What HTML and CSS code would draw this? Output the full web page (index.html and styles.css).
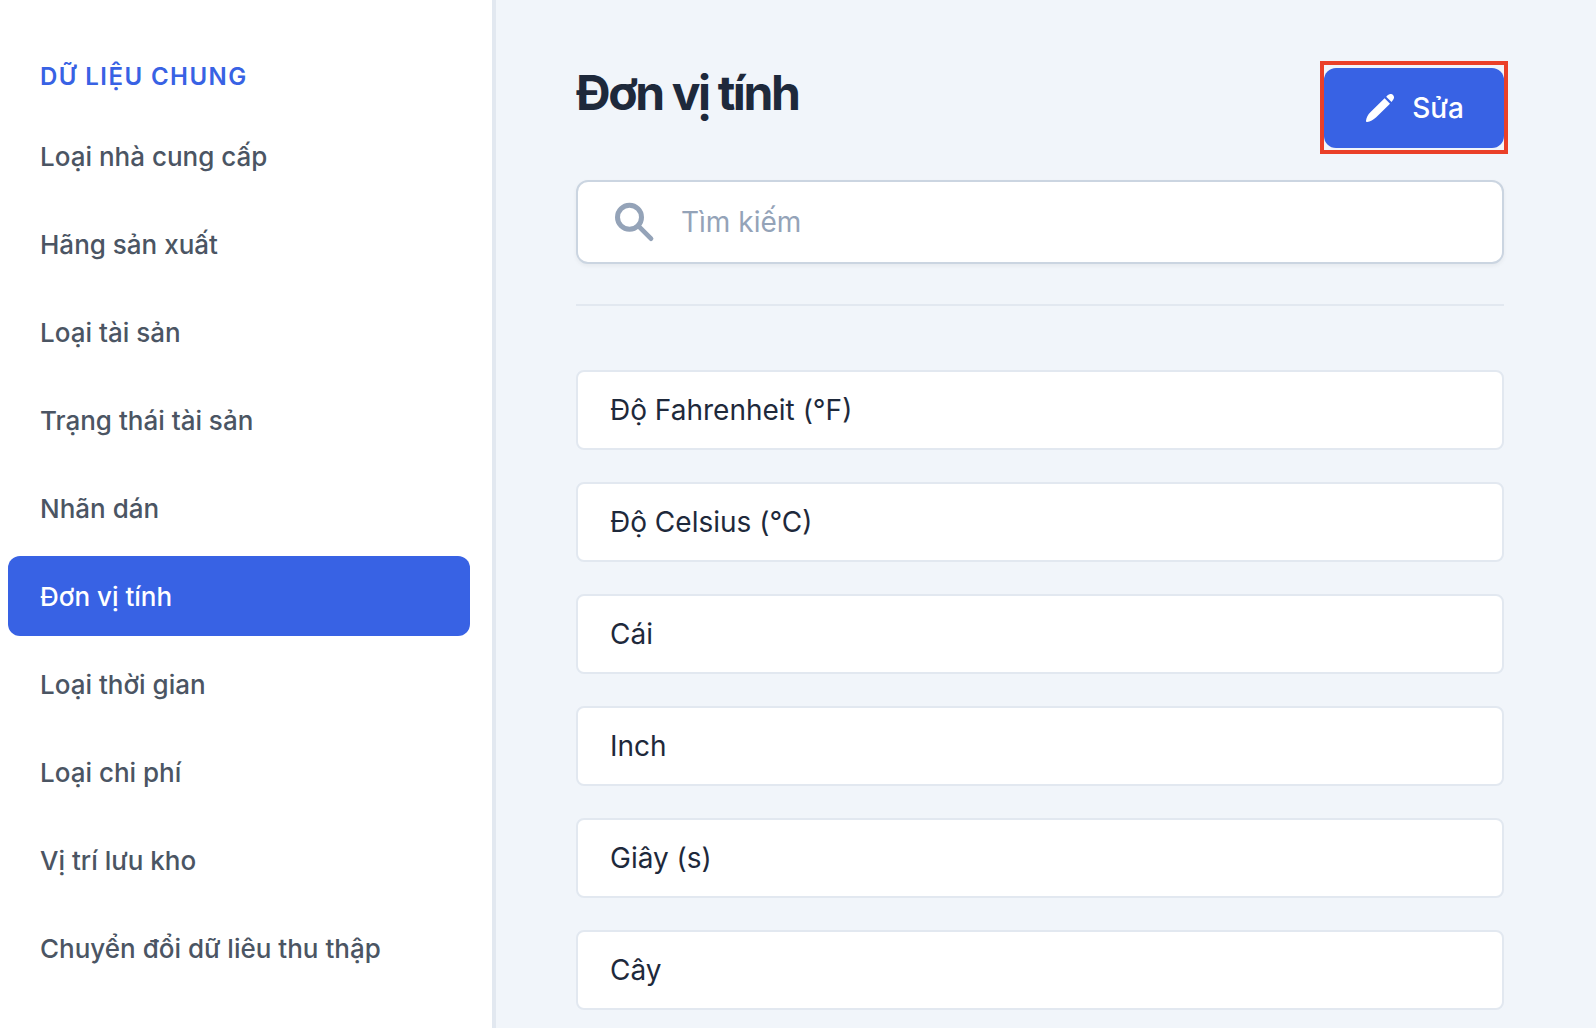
FILE: index.html
```html
<!DOCTYPE html>
<html lang="vi">
<head>
  <meta charset="utf-8">
  <meta name="viewport" content="width=device-width, initial-scale=1">
  <title>Đơn vị tính</title>
  <link rel="stylesheet" href="styles.css">
</head>
<body>
  <div class="layout">
    <aside class="sidebar">
      <h2 class="sidebar-title">Dữ liệu chung</h2>
      <nav class="menu" aria-label="Dữ liệu chung">
        <a class="menu-link" href="#">Loại nhà cung cấp</a>
        <a class="menu-link" href="#">Hãng sản xuất</a>
        <a class="menu-link" href="#">Loại tài sản</a>
        <a class="menu-link" href="#">Trạng thái tài sản</a>
        <a class="menu-link" href="#">Nhãn dán</a>
        <a class="menu-link active" href="#" aria-current="page">Đơn vị tính</a>
        <a class="menu-link" href="#">Loại thời gian</a>
        <a class="menu-link" href="#">Loại chi phí</a>
        <a class="menu-link" href="#">Vị trí lưu kho</a>
        <a class="menu-link" href="#">Chuyển đổi dữ liêu thu thập</a>
      </nav>
    </aside>
    <main class="content">
      <header class="page-header">
        <h1 class="page-title">Đơn vị tính</h1>
        <div class="highlight">
          <button class="edit-button" type="button">
            <svg class="edit-icon" viewBox="0 0 28 28" aria-hidden="true">
              <path d="M18.600 4.300 24 9.700 10.200 23.300C7.300 26 4.200 27.600 1.200 28 .3 28.100-.1 27.600 0 26.700.4 23.800 1.800 20.800 4.600 18.100ZM20.200 2.700 21.600 1.300C23.400-.4 25.700-.4 27 .9 28.400 2.200 28.400 4.500 26.800 6.300L25.500 8Z" fill="currentColor"/>
            </svg>
            Sửa
          </button>
        </div>
      </header>
      <label class="search">
        <svg class="search-icon" viewBox="0 0 40 40" aria-hidden="true">
          <circle cx="14.500" cy="15.200" r="12" fill="none" stroke="currentColor" stroke-width="5"/>
          <path d="M23 23.600 36 36.600" stroke="currentColor" stroke-width="4.800" stroke-linecap="round"/>
        </svg>
        <input class="search-input" type="text" placeholder="Tìm kiếm" aria-label="Tìm kiếm">
      </label>
      <hr class="divider">
      <ul class="units">
        <li class="unit">Độ Fahrenheit (°F)</li>
        <li class="unit">Độ Celsius (°C)</li>
        <li class="unit">Cái</li>
        <li class="unit">Inch</li>
        <li class="unit">Giây (s)</li>
        <li class="unit">Cây</li>
      </ul>
    </main>
  </div>
</body>
</html>
```

FILE: styles.css
```css
* {
  box-sizing: border-box;
}

body {
  margin: 0;
  background: #f1f5fa;
  color: #1e293b;
  font-family: Inter, "Liberation Sans", sans-serif;
  font-size: 28px;
  line-height: 40px;
}

.layout {
  display: flex;
  min-height: 100vh;
}

.sidebar {
  flex: 0 0 496px;
  padding: 57px 22px 0 8px;
  border-right: 4px solid #e2e8f0;
  background: #fff;
}

.sidebar-title {
  margin: 0 0 19px;
  padding-left: 32px;
  color: #3862e4;
  font-size: 24px;
  font-weight: 600;
  letter-spacing: 0.06em;
  text-transform: uppercase;
}

.menu {
  display: flex;
  flex-direction: column;
  gap: 8px;
}

.menu-link {
  padding: 21px 32px 19px;
  border-radius: 12px;
  color: #4b5563;
  font-size: 26px;
  font-weight: 500;
  text-decoration: none;
}

.menu-link.active {
  background: #3862e4;
  color: #fff;
}

.content {
  flex: 1;
  min-width: 0;
  padding: 68px 92px 18px 80px;
}

.page-header {
  display: flex;
  justify-content: space-between;
  align-items: flex-start;
  margin-bottom: 32px;
}

.page-title {
  margin: 0;
  font-size: 48px;
  font-weight: 700;
  line-height: 50px;
  letter-spacing: -0.05em;
}

.highlight {
  position: relative;
}

.highlight::after {
  content: "";
  position: absolute;
  inset: -7px -4px -6px;
  border: 4px solid #ea4028;
  pointer-events: none;
}

.edit-button {
  display: flex;
  align-items: center;
  gap: 18px;
  height: 80px;
  padding: 0 40px 0 42px;
  border: 0;
  border-radius: 12px;
  background: #3862e4;
  color: #fff;
  font: inherit;
  font-weight: 500;
}

.edit-icon {
  width: 28px;
  height: 28px;
}

.search {
  display: flex;
  align-items: center;
  gap: 26px;
  height: 84px;
  padding: 0 37px;
  border: 2px solid #cbd5e1;
  border-radius: 12px;
  background: #fff;
  box-shadow: 0 2px 4px rgba(0, 0, 0, 0.05);
}

.search-icon {
  flex: none;
  width: 40px;
  height: 40px;
  color: #94a3b8;
}

.search-input {
  flex: 1;
  min-width: 0;
  padding: 0;
  border: 0;
  outline: 0;
  background: transparent;
  color: inherit;
  font: inherit;
}

.search-input::placeholder {
  color: #94a3b8;
  opacity: 1;
}

.divider {
  margin: 40px 0 64px;
  border: 0;
  border-top: 2px solid #e2e8f0;
}

.units {
  display: flex;
  flex-direction: column;
  gap: 32px;
  margin: 0;
  padding: 0;
  list-style: none;
}

.unit {
  padding: 18px 32px;
  border: 2px solid #e2e8f0;
  border-radius: 8px;
  background: #fff;
}
```
